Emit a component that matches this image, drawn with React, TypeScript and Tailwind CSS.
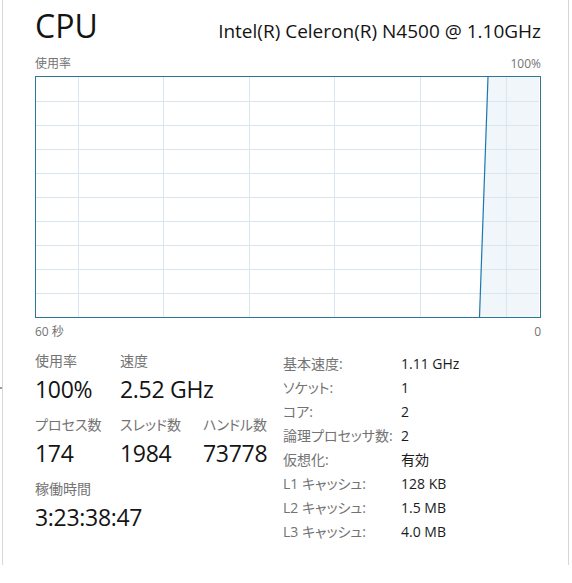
import React from 'react';

const gridX = [78, 163, 249, 334, 420, 506];

const CpuGraph: React.FC = () => {
  const w = 503;
  const h = 240;
  return (
    <svg width={w} height={h} className="block">
      <rect x={0} y={0} width={w} height={h} fill="#ffffff" />
      <polygon points={`${479.5 - 36},${h} ${488 - 36},0 ${w},0 ${w},${h}`} fill="#f1f6fa" />
      {Array.from({ length: 9 }).map((_, i) => (
        <line key={`h${i}`} x1={0} x2={w} y1={24 * (i + 1) + 0.5} y2={24 * (i + 1) + 0.5} stroke="#d9e6ef" strokeWidth={1} />
      ))}
      {gridX.map((x) => (
        <line key={`v${x}`} x1={x - 36 + 0.5} x2={x - 36 + 0.5} y1={0} y2={h} stroke="#d9e6ef" strokeWidth={1} />
      ))}
      <line x1={479.5 - 36} y1={h} x2={488 - 36} y2={0} stroke="#1a78ad" strokeWidth={1.2} />
    </svg>
  );
};

const Stat: React.FC<{ label: string; value: string; className?: string }> = ({ label, value, className }) => (
  <div className={`flex flex-col ${className ?? ''}`}>
    <div className="h-[20px] leading-[20px] text-[14px] text-[#737373] [font-feature-settings:'palt']">{label}</div>
    <div className="h-[36px] leading-[36px] text-[23px] tracking-[-0.3px] text-[#141414] whitespace-nowrap">{value}</div>
  </div>
);

const info: [string, string][] = [
  ['基本速度:', '1.11 GHz'],
  ['ソケット:', '1'],
  ['コア:', '2'],
  ['論理プロセッサ数:', '2'],
  ['仮想化:', '有効'],
  ['L1 キャッシュ:', '128 KB'],
  ['L2 キャッシュ:', '1.5 MB'],
  ['L3 キャッシュ:', '4.0 MB'],
];

export default function App() {
  return (
    <div className="relative w-[572px] h-[583px] bg-white font-['Open_Sans','Noto_Sans_CJK_JP',sans-serif] text-[#141414]">
      {/* stray tick at the window edge */}
      <div className="absolute left-0 top-[387px] w-[2px] h-[2px] bg-[#9a9a9a]" />
      <div className="ml-[2px] w-[567px] h-[565px] border-x border-[#d6d6d6] pl-[32px] pr-[27px]">
        {/* header */}
        <div className="flex items-baseline justify-between pt-[10px] h-[52px]">
          <div className="text-[32px] leading-[32px]">CPU</div>
          <div className="text-[19px] leading-[32px]">Intel(R) Celeron(R) N4500 @ 1.10GHz</div>
        </div>
        <div className="flex items-center justify-between h-[24px] text-[12px] text-[#737373]">
          <span>使用率</span>
          <span>100%</span>
        </div>
        <div className="border border-[#2f7594]">
          <CpuGraph />
        </div>
        <div className="flex items-center justify-between h-[28px] text-[12px] text-[#737373]">
          <span>60 秒</span>
          <span>0</span>
        </div>

        {/* stats */}
        <div className="flex pt-[5px]">
          <div className="w-[248px] flex flex-col gap-[8px]">
            <div className="flex">
              <Stat className="w-[85px]" label="使用率" value="100%" />
              <Stat label="速度" value="2.52 GHz" />
            </div>
            <div className="flex">
              <Stat className="w-[85px]" label="プロセス数" value="174" />
              <Stat className="w-[83px]" label="スレッド数" value="1984" />
              <Stat label="ハンドル数" value="73778" />
            </div>
            <Stat label="稼働時間" value="3:23:38:47" />
          </div>
          <div className="flex flex-col text-[14px]">
            {info.map(([k, v]) => (
              <div key={k} className="flex h-[24px] items-center">
                <span className="w-[118px] text-[#737373] [font-feature-settings:'palt']">{k}</span>
                <span className="text-[#1b1b1b]">{v}</span>
              </div>
            ))}
          </div>
        </div>
      </div>
    </div>
  );
}
